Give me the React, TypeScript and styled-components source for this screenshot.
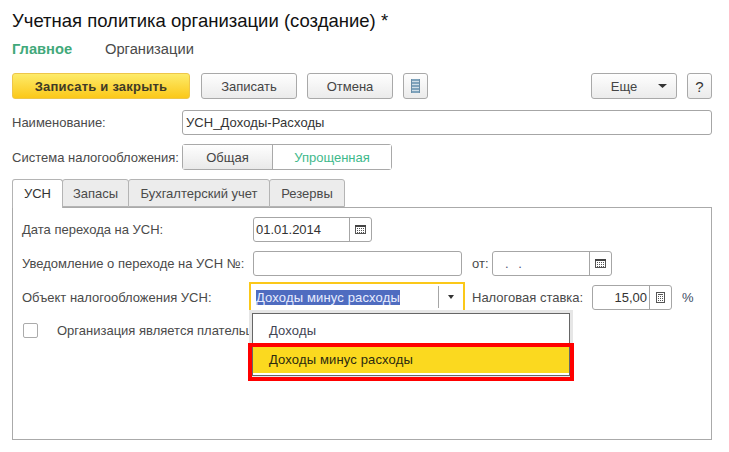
import React from "react";
import styled, { createGlobalStyle } from "styled-components";

const Global = createGlobalStyle`
  html, body { margin: 0; padding: 0; background: #fff; }
  body { font-family: "Liberation Sans", Arial, sans-serif; font-size: 13px; color: #4a4a4a; }
`;

const Page = styled.div`
  width: 729px;
  height: 452px;
  box-sizing: border-box;
  padding: 0 17px 0 12px;
  overflow: hidden;
`;

const Title = styled.h1`
  margin: 0;
  padding-top: 11px;
  height: 42px;
  box-sizing: border-box;
  font-size: 18.5px;
  line-height: 20px;
  font-weight: 400;
  color: #111;
`;

const Sections = styled.nav`
  display: flex;
  height: 14px;
  align-items: center;
  margin-bottom: 17px;
`;

const Section = styled.span<{ $active?: boolean }>`
  font-size: 14.7px;
  line-height: 14px;
  width: 93px;
  font-weight: ${(p) => (p.$active ? 700 : 400)};
  color: ${(p) => (p.$active ? "#41a97a" : "#4a4a4a")};
`;

const Toolbar = styled.div`
  display: flex;
  height: 26px;
`;

const Button = styled.button<{ $width: number; $gap?: number; $primary?: boolean }>`
  width: ${(p) => p.$width}px;
  height: 26px;
  margin-left: ${(p) => p.$gap ?? 0}px;
  padding: 0;
  box-sizing: border-box;
  display: flex;
  align-items: center;
  justify-content: center;
  border-radius: 3px;
  font: ${(p) => (p.$primary ? 700 : 400)} 13px "Liberation Sans", Arial, sans-serif;
  letter-spacing: ${(p) => (p.$primary ? "0.2px" : "0")};
  color: ${(p) => (p.$primary ? "#3f3a26" : "#444")};
  border: 1px solid ${(p) => (p.$primary ? "#eec64a" : "#a9a9a9")};
  background: ${(p) =>
    p.$primary
      ? "linear-gradient(#fdeb6a, #fbc819)"
      : "linear-gradient(#fefefe, #ebebeb)"};
`;

const MoreLabel = styled.span`
  margin-left: 10px;
  margin-right: 21px;
`;

const HelpMark = styled.span`
  font-size: 15px;
  color: #333;
`;

const Spacer = styled.div`
  flex: 1;
`;

const FormRow = styled.div<{ $height: number; $top: number }>`
  display: flex;
  align-items: center;
  height: ${(p) => p.$height}px;
  margin-top: ${(p) => p.$top}px;
`;

const Label = styled.label<{ $width?: number; $left?: number }>`
  display: block;
  flex: none;
  width: ${(p) => (p.$width ? `${p.$width}px` : "auto")};
  margin-left: ${(p) => p.$left ?? 0}px;
  font-size: 13px;
  color: #4a4a4a;
  white-space: nowrap;
`;

const Field = styled.div<{ $width?: number; $left?: number }>`
  display: flex;
  align-items: stretch;
  box-sizing: border-box;
  flex: ${(p) => (p.$width ? "none" : 1)};
  width: ${(p) => (p.$width ? `${p.$width}px` : "auto")};
  height: 25px;
  margin-left: ${(p) => p.$left ?? 0}px;
  border: 1px solid #a6a6a6;
  border-radius: 3px;
  background: #fff;
`;

const Value = styled.div<{ $right?: boolean; $dim?: boolean; $inset?: number }>`
  flex: 1;
  min-width: 0;
  padding: 0 2px 0 ${(p) => p.$inset ?? 2}px;
  line-height: 23px;
  font-size: 13px;
  letter-spacing: ${(p) => (p.$dim ? "-0.3px" : p.$inset ? "0.08px" : "0")};
  color: ${(p) => (p.$dim ? "#557" : "#333")};
  text-align: ${(p) => (p.$right ? "right" : "left")};
  white-space: pre;
`;

const Addon = styled.div`
  flex: none;
  width: 22px;
  box-sizing: border-box;
  border-left: 1px solid #a6a6a6;
  display: flex;
  align-items: center;
  justify-content: center;
`;

const Segments = styled.div`
  display: flex;
  width: 210px;
  height: 26px;
  box-sizing: border-box;
  border: 1px solid #a9a9a9;
  border-radius: 3px;
`;

const Segment = styled.div<{ $width: number; $on?: boolean }>`
  width: ${(p) => p.$width}px;
  flex: none;
  box-sizing: border-box;
  display: flex;
  align-items: center;
  justify-content: center;
  font-size: 13px;
  color: ${(p) => (p.$on ? "#3fb98b" : "#444")};
  background: ${(p) => (p.$on ? "#fff" : "linear-gradient(#fefefe, #e9e9e9)")};
  border-right: ${(p) => (p.$on ? "none" : "1px solid #a9a9a9")};
`;

const TabBar = styled.div`
  display: flex;
  margin-top: 9px;
  height: 28px;
`;

const Tab = styled.div<{ $width: number; $active?: boolean }>`
  width: ${(p) => p.$width}px;
  box-sizing: border-box;
  height: ${(p) => (p.$active ? 29 : 28)}px;
  position: relative;
  z-index: ${(p) => (p.$active ? 1 : 0)};
  display: flex;
  align-items: center;
  justify-content: center;
  padding-bottom: ${(p) => (p.$active ? 2 : 0)}px;
  font-size: 13px;
  color: ${(p) => (p.$active ? "#333" : "#4a4a4a")};
  background: ${(p) => (p.$active ? "#fff" : "#ececec")};
  border: 1px solid #b4b4b4;
  border-bottom: ${(p) => (p.$active ? "none" : "1px solid #b4b4b4")};
  margin-right: -1px;
  border-radius: 3px 3px 0 0;
`;

const Panel = styled.section`
  box-sizing: border-box;
  height: 233px;
  border: 1px solid #aaa;
  padding: 9px 39px 0 9px;
`;

const Combo = styled.div`
  position: relative;
  flex: none;
  box-sizing: border-box;
  width: 216px;
  height: 30px;
  display: flex;
  align-items: center;
  border: 2px solid #fbc819;
  border-bottom-color: transparent;
  padding: 0 0 0 5px;
`;

const ComboText = styled.span`
  flex: 1;
  font-size: 13px;
  letter-spacing: 0.15px;
`;

const Selected = styled.span`
  background: #4f6cc0;
  color: #e8ecff;
`;

const ComboArrow = styled.div`
  width: 24px;
  height: 22px;
  flex: none;
  border-left: 1px solid #a6a6a6;
  display: flex;
  align-items: center;
  justify-content: center;
`;

const Unit = styled.span`
  margin-left: 10px;
  font-size: 13px;
  color: #3d4b63;
`;

const Check = styled.div`
  width: 15px;
  height: 15px;
  box-sizing: border-box;
  flex: none;
  margin-left: 1px;
  margin-right: 19px;
  border: 1px solid #ababab;
  border-radius: 2px;
  background: #fff;
`;

const Popup = styled.div`
  position: absolute;
  left: 1px;
  top: 29px;
  width: 318px;
  box-sizing: border-box;
  z-index: 2;
  padding-bottom: 2px;
  background: #fff;
  border: 1px solid #666;
  box-shadow: 0 0 0 3px #e6e6e6;
`;

const Item = styled.div<{ $current?: boolean }>`
  position: relative;
  box-sizing: border-box;
  height: ${(p) => (p.$current ? 26 : 33)}px;
  padding-left: 16px;
  line-height: ${(p) => (p.$current ? 26 : 34)}px;
  font-size: 13px;
  letter-spacing: 0.15px;
  color: ${(p) => (p.$current ? "#2a2a10" : "#3f4454")};
  background: ${(p) => (p.$current ? "#fbd91f" : "#fff")};
`;

const RedFrame = styled.div`
  position: absolute;
  left: -5px;
  right: -5px;
  top: -4px;
  bottom: -8px;
  border: 4px solid #ff0000;
`;

const CalendarIcon = () => (
  <svg width="11" height="9" viewBox="0 0 11 9" shapeRendering="crispEdges">
    <rect x="0.5" y="0.5" width="10" height="8" fill="#fff" stroke="#555" />
    <rect x="0" y="0" width="11" height="2" fill="#444" />
    {[2, 4, 6, 8].flatMap((x) =>
      [3, 5, 7].map((y) => <rect key={`${x}-${y}`} x={x} y={y} width="1" height="1" fill="#555" />)
    )}
  </svg>
);

const CalcIcon = () => (
  <svg width="9" height="11" viewBox="0 0 9 11" shapeRendering="crispEdges">
    <rect x="0.5" y="0.5" width="8" height="10" fill="#fff" stroke="#555" />
    <rect x="2" y="2" width="5" height="1" fill="#555" />
    {[4, 6, 8].flatMap((y) =>
      [2, 4, 6].map((x) => <rect key={`${x}-${y}`} x={x} y={y} width="1" height="1" fill="#555" />)
    )}
  </svg>
);

const ListIcon = () => (
  <svg width="9" height="14" viewBox="0 0 9 14" shapeRendering="crispEdges">
    <rect width="9" height="14" fill="#7fa3bc" />
    {[2, 5, 8, 11].map((y) => (
      <rect key={y} x="0" y={y} width="9" height="1" fill="#cfdde7" />
    ))}
    <rect x="0" y="0" width="1" height="14" fill="#6a8ea8" />
    <rect x="8" y="0" width="1" height="14" fill="#6a8ea8" />
  </svg>
);

const Caret = ({ w = 7 }: { w?: number }) => (
  <svg width={w} height="4" viewBox="0 0 7 4" preserveAspectRatio="none">
    <path d="M0 0h7L3.5 4z" fill="#333" />
  </svg>
);

export default function App() {
  return (
    <Page>
      <Global />
      <Title>Учетная политика организации (создание) *</Title>
      <Sections>
        <Section $active>Главное</Section>
        <Section>Организации</Section>
      </Sections>
      <Toolbar>
        <Button $primary $width={178}>Записать и закрыть</Button>
        <Button $width={96} $gap={11}>Записать</Button>
        <Button $width={86} $gap={10}>Отмена</Button>
        <Button $width={25} $gap={10}><ListIcon /></Button>
        <Spacer />
        <Button $width={86}>
          <MoreLabel>Еще</MoreLabel>
          <Caret w={9} />
        </Button>
        <Button $width={25} $gap={10}><HelpMark>?</HelpMark></Button>
      </Toolbar>
      <FormRow $height={25} $top={11}>
        <Label $width={170}>Наименование:</Label>
        <Field><Value $inset={3}>УСН_Доходы-Расходы</Value></Field>
      </FormRow>
      <FormRow $height={26} $top={9}>
        <Label $width={170}>Система налогообложения:</Label>
        <Segments>
          <Segment $width={90}>Общая</Segment>
          <Segment $width={118} $on>Упрощенная</Segment>
        </Segments>
      </FormRow>
      <TabBar>
        <Tab $width={51} $active>УСН</Tab>
        <Tab $width={67}>Запасы</Tab>
        <Tab $width={142}>Бухгалтерский учет</Tab>
        <Tab $width={76}>Резервы</Tab>
      </TabBar>
      <Panel>
        <FormRow $height={25} $top={0}>
          <Label $width={231}>Дата перехода на УСН:</Label>
          <Field $width={119}>
            <Value>01.01.2014</Value>
            <Addon><CalendarIcon /></Addon>
          </Field>
        </FormRow>
        <FormRow $height={25} $top={9}>
          <Label $width={231}>Уведомление о переходе на УСН №:</Label>
          <Field $width={209}><Value /></Field>
          <Label $width={20} $left={10}>от:</Label>
          <Field $width={120}>
            <Value $dim>{"   .   ."}</Value>
            <Addon><CalendarIcon /></Addon>
          </Field>
        </FormRow>
        <FormRow $height={30} $top={6}>
          <Label $width={227}>Объект налогообложения УСН:</Label>
          <Combo>
            <ComboText><Selected>Доходы минус расходы</Selected></ComboText>
            <ComboArrow><Caret w={6} /></ComboArrow>
            <Popup>
              <Item>Доходы</Item>
              <Item $current>
                Доходы минус расходы
                <RedFrame />
              </Item>
            </Popup>
          </Combo>
          <Label $width={120} $left={7}>Налоговая ставка:</Label>
          <Field $width={80}>
            <Value $right>15,00</Value>
            <Addon><CalcIcon /></Addon>
          </Field>
          <Unit>%</Unit>
        </FormRow>
        <FormRow $height={15} $top={11}>
          <Check />
          <Label>Организация является плательщиком</Label>
        </FormRow>
      </Panel>
    </Page>
  );
}
